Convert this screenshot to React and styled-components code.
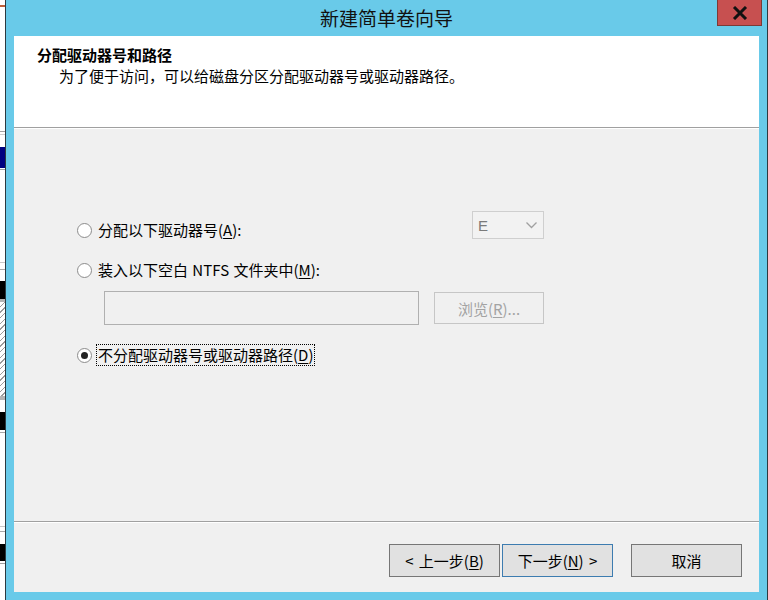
import React from "react";
import styled, { createGlobalStyle } from "styled-components";

const GlobalStyle = createGlobalStyle`
  html, body { margin: 0; padding: 0; background: #ffffff; }
  body { font-family: "Noto Sans CJK SC", "Noto Sans", sans-serif; }
  * { box-sizing: border-box; }
`;

const FONT = `"Noto Sans CJK SC", "Noto Sans", sans-serif`;

const Page = styled.div`
  width: 768px;
  height: 600px;
  display: flex;
  overflow: hidden;
`;

const Backdrop = styled.div`
  width: 5px;
  display: flex;
  flex-direction: column;
  background: #ffffff;
`;

const Segment = styled.div`
  flex: 0 0 ${(p) => p.$h}px;
  background: ${(p) => p.$c};
  ${(p) =>
    p.$hatch &&
    `background-image: repeating-linear-gradient(135deg, #ffffff 0 3px, #9a9a9a 3px 4px);`}
`;

const Window = styled.div`
  flex: 1;
  display: flex;
  flex-direction: column;
  background: #69cae9;
  border-left: 1px solid #2d3a40;
  border-right: 1px solid #2d3a40;
  position: relative;
`;

const TitleBar = styled.div`
  height: 36px;
  flex: 0 0 36px;
  display: flex;
  align-items: center;
  justify-content: center;
  font-family: ${FONT};
  font-size: 19px;
  color: #111;
  padding-bottom: 1px;
`;

const CloseButton = styled.div`
  position: absolute;
  top: 0;
  right: 5px;
  width: 45px;
  height: 26px;
  background: #c75050;
  border: 1px solid #7c3a36;
  border-top: none;
  display: flex;
  align-items: center;
  justify-content: center;
`;

const Content = styled.div`
  flex: 1;
  margin: 0 8px 8px 8px;
  background: #f0f0f0;
  display: flex;
  flex-direction: column;
`;

const Header = styled.div`
  flex: 0 0 92px;
  background: #ffffff;
  border-bottom: 1px solid #a0a0a0;
  box-shadow: 0 1px 0 #ffffff;
  padding: 9px 0 0 23px;
  font-family: ${FONT};
  font-size: 15px;
  color: #000;
`;

const HeaderTitle = styled.div`
  font-weight: 700;
  line-height: 20px;
`;

const HeaderSub = styled.div`
  line-height: 20px;
  margin-top: 1px;
  padding-left: 22px;
`;

const Body = styled.div`
  flex: 1;
  padding: 81px 0 0 63px;
  font-family: ${FONT};
  font-size: 15px;
  color: #000;
  margin-top: 2px;
`;

const Options = styled.div`
  width: 467px;
  display: flex;
  flex-direction: column;
`;

const OptionRow = styled.div`
  display: flex;
  align-items: flex-start;
  margin-top: ${(p) => p.$mt || 0}px;
`;

const RadioLine = styled.div`
  display: flex;
  align-items: center;
  height: 22px;
  margin-top: ${(p) => p.$mt || 0}px;
`;

const RadioCircle = styled.span`
  width: 15px;
  height: 15px;
  border-radius: 50%;
  border: 1px solid #8c8c8c;
  background: #ffffff;
  display: flex;
  align-items: center;
  justify-content: center;
  flex: 0 0 15px;
  &::after {
    content: "";
    width: 7px;
    height: 7px;
    border-radius: 50%;
    background: ${(p) => (p.$checked ? "#222" : "transparent")};
  }
`;

const RadioLabel = styled.span`
  margin-left: 4px;
  height: 22px;
  display: flex;
  align-items: center;
  padding: 0 1px;
  border: 1px ${(p) => (p.$focus ? "dotted #000" : "solid transparent")};
  line-height: 20px;
  white-space: pre;
  word-spacing: ${(p) => p.$ws || 0}px;
`;

const Key = styled.span`
  text-decoration: underline;
  text-underline-offset: 2px;
`;

const Select = styled.div`
  margin-left: auto;
  width: 72px;
  height: 28px;
  border: 1px solid #cfcfcf;
  background: #f2f2f2;
  display: flex;
  align-items: center;
  justify-content: space-between;
  padding: 0 6px 0 5px;
  color: #7a7a7a;
  font-family: "Liberation Sans", sans-serif;
  font-size: 15px;
`;

const FolderRow = styled.div`
  display: flex;
  align-items: center;
  margin-top: 10px;
  padding-left: 27px;
`;

const PathField = styled.div`
  width: 315px;
  height: 34px;
  border: 1px solid #b0b0b0;
  background: #f0f0f0;
`;

const DisabledButton = styled.div`
  margin-left: 15px;
  width: 110px;
  height: 32px;
  border: 1px solid #c6c6c6;
  background: #f0f0f0;
  color: #a3a3a3;
  display: flex;
  align-items: center;
  justify-content: center;
  font-size: 15px;
`;

const Footer = styled.div`
  flex: 0 0 71px;
  border-top: 1px solid #a0a0a0;
  box-shadow: inset 0 1px 0 #ffffff;
  display: flex;
  align-items: flex-start;
  justify-content: flex-end;
  padding: 22px 17px 0 0;
`;

const Button = styled.div`
  width: ${(p) => p.$w || 111}px;
  height: 33px;
  margin-left: ${(p) => p.$ml || 0}px;
  border: 1px solid ${(p) => (p.$default ? "#3d7cb0" : "#767676")};
  background: #e1e1e1;
  display: flex;
  align-items: center;
  justify-content: center;
  font-family: ${FONT};
  font-size: 15px;
  color: #000;
  white-space: pre;
  word-spacing: 2px;
`;

const strip = [
  { h: 5, c: "#ffffff" },
  { h: 2, c: "#c0603a" },
  { h: 124, c: "#ffffff" },
  { h: 1, c: "#a0a0a0" },
  { h: 2, c: "#ffffff" },
  { h: 1, c: "#cfcfcf" },
  { h: 12, c: "#ffffff" },
  { h: 21, c: "#000080" },
  { h: 1, c: "#ffffff" },
  { h: 1, c: "#a0a0a0" },
  { h: 92, c: "#ffffff" },
  { h: 1, c: "#c8c8c8" },
  { h: 6, c: "#ffffff" },
  { h: 1, c: "#a8a8a8" },
  { h: 11, c: "#ffffff" },
  { h: 18, c: "#000000" },
  { h: 3, c: "#b4b4b4" },
  { h: 94, c: "#ffffff", hatch: true },
  { h: 4, c: "#b4b4b4" },
  { h: 12, c: "#ffffff" },
  { h: 18, c: "#000000" },
  { h: 2, c: "#ffffff" },
  { h: 1, c: "#a8a8a8" },
  { h: 93, c: "#ffffff" },
  { h: 1, c: "#c8c8c8" },
  { h: 4, c: "#ffffff" },
  { h: 1, c: "#a8a8a8" },
  { h: 12, c: "#ffffff" },
  { h: 17, c: "#000000" },
  { h: 2, c: "#ffffff" },
  { h: 1, c: "#a0a0a0" },
  { h: 40, c: "#ffffff" },
];

export default function App() {
  return (
    <>
      <GlobalStyle />
      <Page>
        <Backdrop>
          {strip.map((s, i) => (
            <Segment key={i} $h={s.h} $c={s.c} $hatch={s.hatch} />
          ))}
        </Backdrop>
        <Window>
          <TitleBar>新建简单卷向导</TitleBar>
          <CloseButton>
            <svg width="16" height="14" viewBox="0 0 16 14">
              <path d="M2 1 L14 13 M14 1 L2 13" stroke="#111" strokeWidth="3" strokeLinecap="butt" />
            </svg>
          </CloseButton>
          <Content>
            <Header>
              <HeaderTitle>分配驱动器号和路径</HeaderTitle>
              <HeaderSub>为了便于访问，可以给磁盘分区分配驱动器号或驱动器路径。</HeaderSub>
            </Header>
            <Body>
              <Options>
                <OptionRow>
                  <RadioLine $mt={8}>
                    <RadioCircle />
                    <RadioLabel>
                      分配以下驱动器号(<Key>A</Key>):
                    </RadioLabel>
                  </RadioLine>
                  <Select>
                    <span>E</span>
                    <svg width="11" height="7" viewBox="0 0 11 7">
                      <path d="M0.5 0.5 L5.5 5.5 L10.5 0.5" fill="none" stroke="#a0a0a0" strokeWidth="1.3" />
                    </svg>
                  </Select>
                </OptionRow>
                <RadioLine $mt={18}>
                  <RadioCircle />
                  <RadioLabel $ws={1}>
                    {"装入以下空白 NTFS 文件夹中("}<Key>M</Key>{"):"}
                  </RadioLabel>
                </RadioLine>
                <FolderRow>
                  <PathField />
                  <DisabledButton>
                    浏览(<Key>R</Key>)...
                  </DisabledButton>
                </FolderRow>
                <RadioLine $mt={19}>
                  <RadioCircle $checked />
                  <RadioLabel $focus>
                    不分配驱动器号或驱动器路径(<Key>D</Key>)
                  </RadioLabel>
                </RadioLine>
              </Options>
            </Body>
            <Footer>
              <Button>
                {"< 上一步("}<Key>B</Key>{")"}
              </Button>
              <Button $w={111} $ml={2} $default>
                {"下一步("}<Key>N</Key>{") >"}
              </Button>
              <Button $ml={18}>取消</Button>
            </Footer>
          </Content>
        </Window>
      </Page>
    </>
  );
}
